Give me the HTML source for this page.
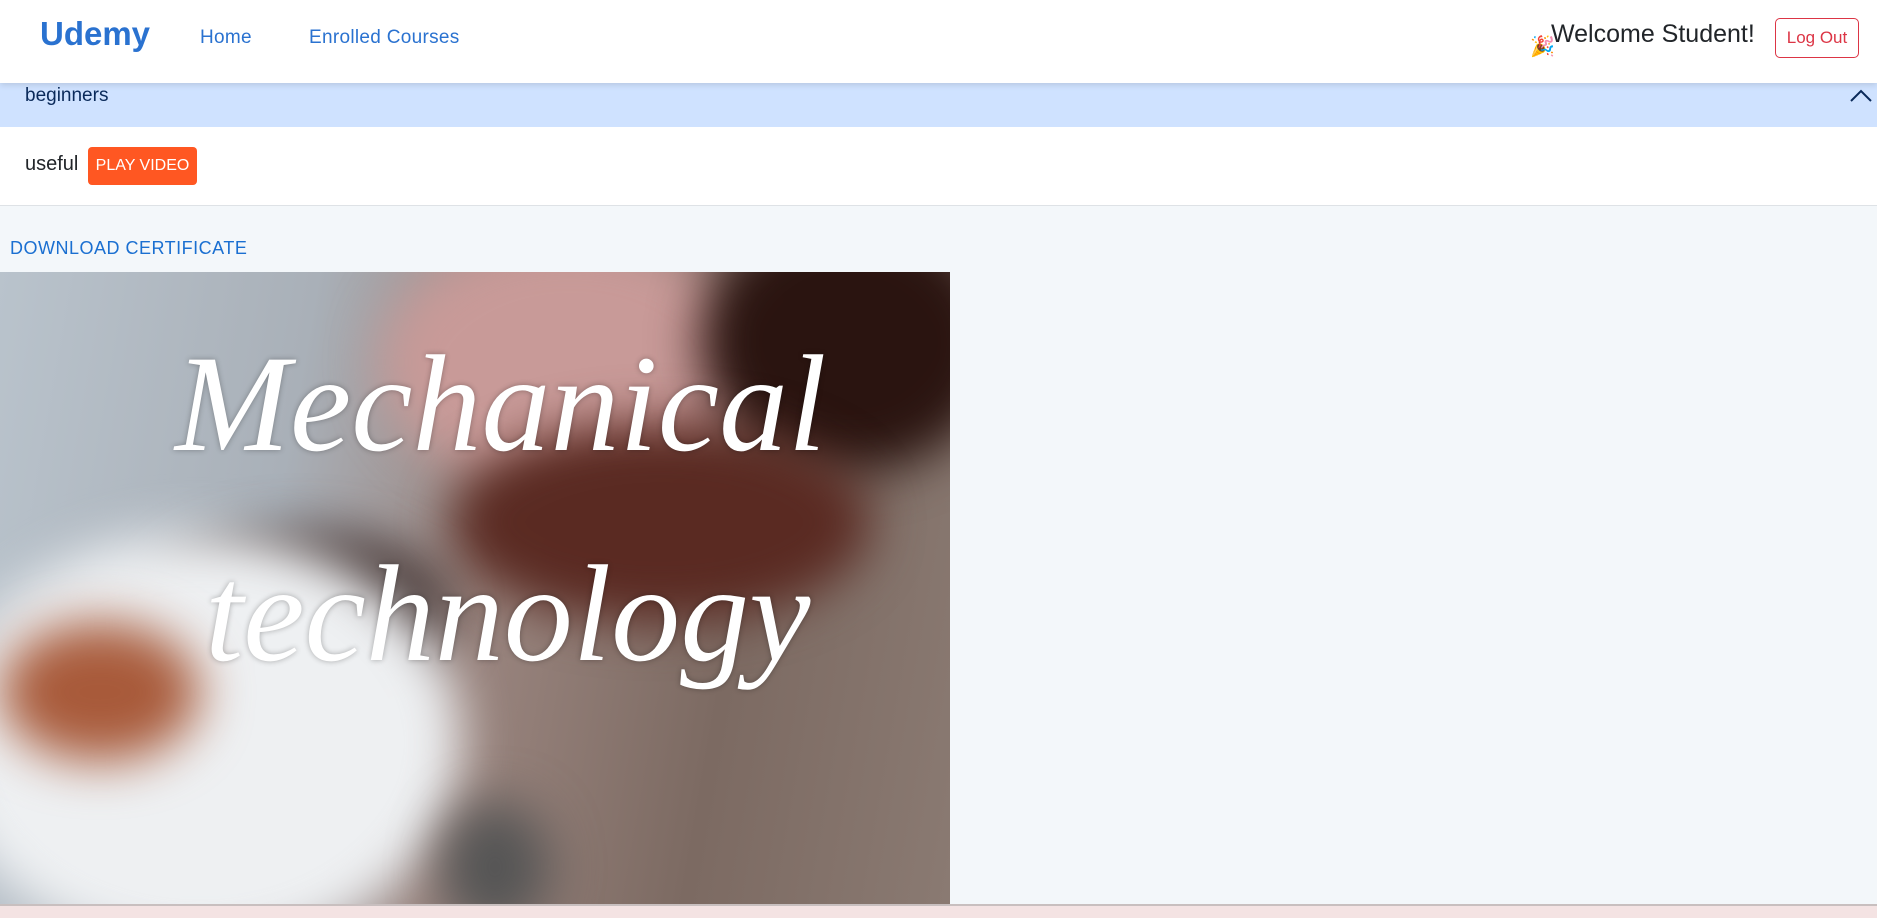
<!DOCTYPE html>
<html><head><meta charset="utf-8"><style>
*{margin:0;padding:0;box-sizing:border-box}
body{width:1877px;height:918px;overflow:hidden;background:#f3f7fa;font-family:"Liberation Sans",sans-serif;position:relative}
.hdr{position:absolute;left:0;top:0;width:1877px;height:83px;background:#fff;box-shadow:0 2px 6px rgba(0,0,0,.12);z-index:2}
.logo{position:absolute;left:40px;top:15px;font-size:33px;font-weight:bold;color:#2a72d0}
.nav{position:absolute;top:27px;font-size:19px;color:#2a72d0;letter-spacing:.3px}
.welcome{position:absolute;left:1551px;top:20px;font-size:25px;color:#212529}
.party{position:absolute;left:1530px;top:34px;font-size:20px}
.logout{position:absolute;left:1775px;top:18px;width:84px;height:40px;border:1px solid #dc3545;border-radius:5px;color:#dc3545;font-size:17px;text-align:center;line-height:38px}
.acc{position:absolute;left:0;top:83px;width:1877px;height:44px;background:#cfe2ff}
.acc span{position:absolute;left:25px;top:2px;font-size:19px;color:#0a2a5a}
.body{position:absolute;left:0;top:127px;width:1877px;height:79px;background:#fff;border-bottom:1px solid #dee2e6}
.body .u{position:absolute;left:25px;top:26px;font-size:20px;color:#212529}
.play{position:absolute;left:88px;top:20px;width:109px;height:38px;background:#ff5722;border-radius:4px;color:#fff;font-size:16px;text-align:center;line-height:38px}
.dl{position:absolute;left:10px;top:238px;font-size:18px;color:#1a6fd1;letter-spacing:.5px}
.img{position:absolute;left:0;top:272px;width:950px;height:632px;overflow:hidden;background:linear-gradient(100deg,#b9c3cc 0%,#a9b0b8 30%,#9b8680 50%,#7c6a62 75%,#8a7a72 100%)}
.b{position:absolute;border-radius:50%;filter:blur(25px)}
.t{position:absolute;color:#fff;font-family:"Liberation Serif",serif;font-style:italic;font-size:138px;text-shadow:0 0 6px rgba(0,0,0,.3)}
.foot{position:absolute;left:0;top:904px;width:1877px;height:14px;background:#f4e3e3;border-top:2px solid #c8bfbf}
</style></head><body>
<div class="hdr">
<div class="logo">Udemy</div>
<div class="nav" style="left:200px">Home</div>
<div class="nav" style="left:309px">Enrolled Courses</div>
<div class="party">🎉</div>
<div class="welcome">Welcome Student!</div>
<div class="logout">Log Out</div>
</div>
<div class="acc"><span>beginners</span>
<svg style="position:absolute;left:1850px;top:6px" width="22" height="14" viewBox="0 0 22 14"><path d="M1 12 L11 2 L21 12" fill="none" stroke="#0a2a5a" stroke-width="2"/></svg></div>
<div class="body"><span class="u">useful</span><div class="play">PLAY VIDEO</div></div>
<div class="dl">DOWNLOAD CERTIFICATE</div>
<div class="img">
<div class="b" style="left:380px;top:-40px;width:380px;height:260px;background:#c89a98"></div>
<div class="b" style="left:700px;top:-60px;width:300px;height:260px;background:#2a1410"></div>
<div class="b" style="left:450px;top:150px;width:420px;height:200px;background:#5a2a22"></div>
<div class="b" style="left:150px;top:260px;width:300px;height:160px;background:#3a2a28"></div>
<div class="b" style="left:-60px;top:260px;width:520px;height:420px;background:#eef0f2"></div>
<div class="b" style="left:0;top:350px;width:200px;height:140px;background:#a85a3a"></div>
<div class="b" style="left:440px;top:530px;width:110px;height:130px;background:#555"></div>
<div class="t" style="left:175px;top:52px">Mechanical</div>
<div class="t" style="left:205px;top:262px">technology</div>
</div>
<div class="foot"></div>
</body></html>
